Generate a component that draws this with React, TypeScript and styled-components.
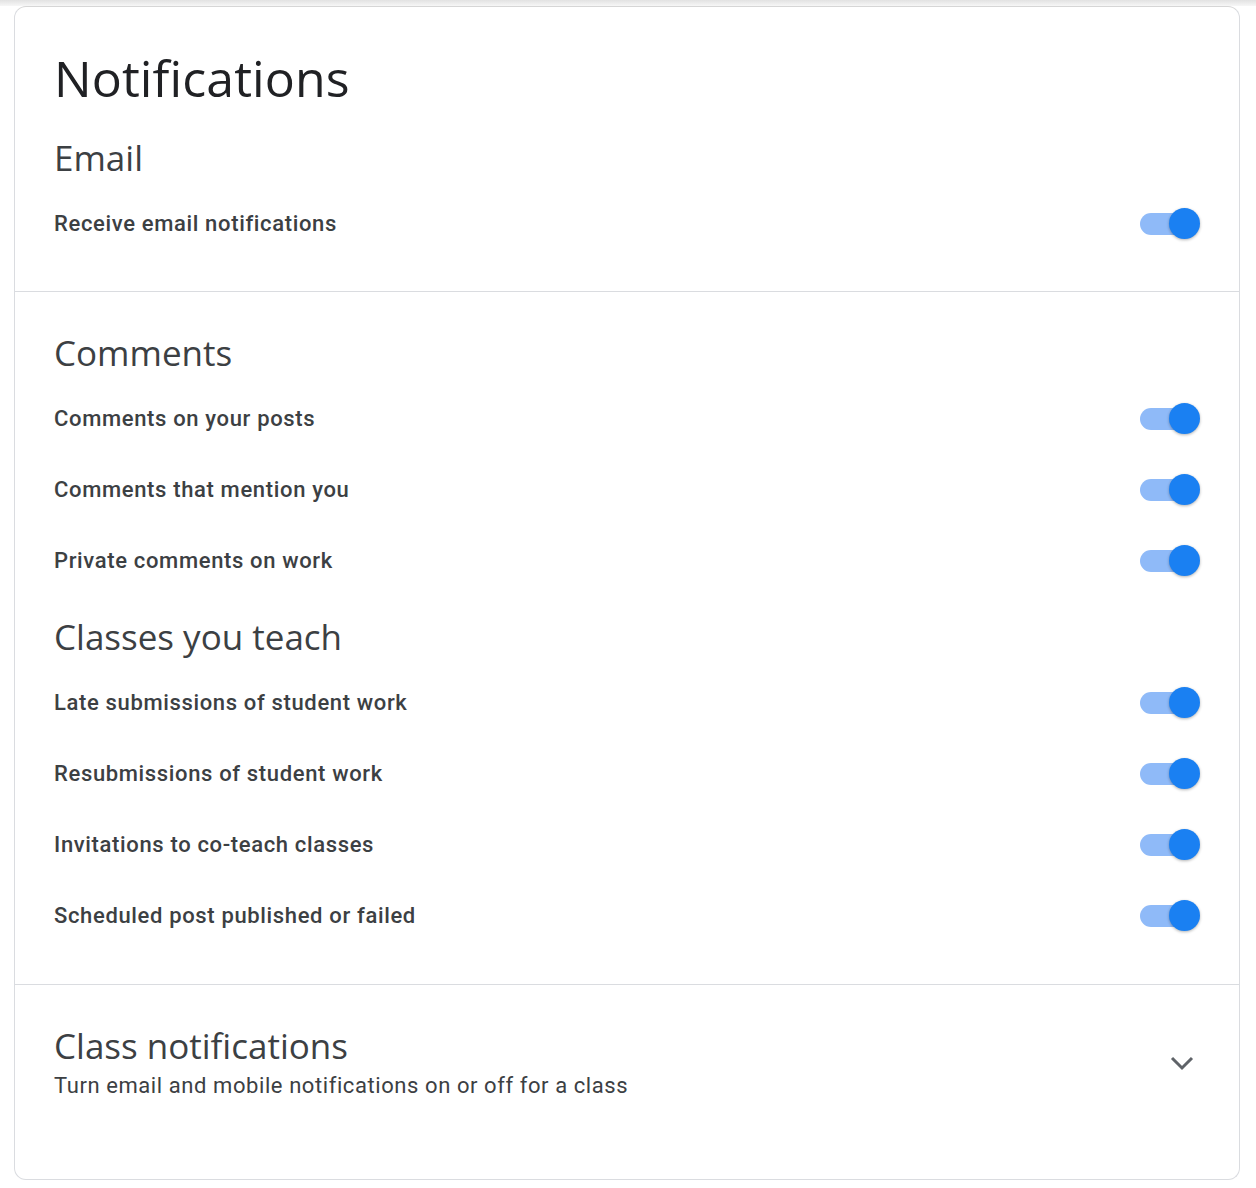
import React from "react";
import styled, { createGlobalStyle } from "styled-components";

const Global = createGlobalStyle`
  html, body { margin: 0; padding: 0; background: #ffffff; }
  body { font-family: Roboto, "Liberation Sans", Arial, sans-serif; }
  * { box-sizing: border-box; }
`;

const Page = styled.div`
  width: 1256px;
  min-height: 1188px;
  background: #ffffff;
`;

const Shade = styled.div`
  height: 6px;
  background: linear-gradient(#e2e2e2, #f7f7f7);
`;

const Card = styled.div`
  margin: 0 16px 0 14px;
  border: 1px solid #dadce0;
  border-top-color: #d6d6d6;
  border-radius: 12px;
  background: #ffffff;
  overflow: hidden;
`;

const Section = styled.section<{ $top: number; $bottom: number }>`
  padding: ${(p) => p.$top}px 39px ${(p) => p.$bottom}px 39px;
  & + & {
    border-top: 1px solid #dadce0;
  }
`;

const Title = styled.h1`
  margin: 0;
  font-family: "Open Sans", "Noto Sans", sans-serif;
  font-weight: 400;
  font-size: 50px;
  line-height: 56px;
  letter-spacing: 0.1px;
  color: #202124;
`;

const Group = styled.div<{ $gap: number }>`
  margin-top: ${(p) => p.$gap}px;
`;

const Heading = styled.h2`
  margin: 0 0 8px 0;
  font-family: "Open Sans", "Noto Sans", sans-serif;
  font-weight: 400;
  font-size: 35px;
  line-height: 44px;
  letter-spacing: 0;
  color: #3c4043;
`;

const Row = styled.div`
  height: 71px;
  display: flex;
  align-items: center;
  justify-content: space-between;
`;

const Label = styled.span`
  font-family: Roboto, "Liberation Sans", sans-serif;
  font-weight: 500;
  font-size: 22px;
  letter-spacing: 0.65px;
  color: #3c4043;
`;

const SwitchTrack = styled.div`
  position: relative;
  width: 59px;
  height: 22px;
  margin-right: 1px;
  border-radius: 11px;
  background: #8fbaf8;
`;

const SwitchThumb = styled.div`
  position: absolute;
  right: -1px;
  top: 50%;
  width: 31px;
  height: 31px;
  margin-top: -15.5px;
  border-radius: 50%;
  background: #1a80f2;
  box-shadow: 0 1px 3px rgba(0, 0, 0, 0.3);
`;

const Toggle = () => (
  <SwitchTrack role="switch" aria-checked="true">
    <SwitchThumb />
  </SwitchTrack>
);

const ExpandRow = styled.div`
  display: flex;
  align-items: center;
  justify-content: space-between;
`;

const ExpandText = styled.div`
  display: flex;
  flex-direction: column;
`;

const ExpandTitle = styled.h2`
  margin: 0;
  font-family: "Open Sans", "Noto Sans", sans-serif;
  font-weight: 400;
  font-size: 35px;
  line-height: 44px;
  letter-spacing: 0;
  color: #3c4043;
`;

const Sub = styled.div`
  margin-top: 3px;
  font-family: Roboto, "Liberation Sans", sans-serif;
  font-weight: 400;
  font-size: 22px;
  line-height: 30px;
  letter-spacing: 0.58px;
  color: #3c4043;
`;

const IconBox = styled.div`
  width: 36px;
  height: 36px;
  display: flex;
  align-items: center;
  justify-content: center;
`;

const Chevron = () => (
  <IconBox>
    <svg width="26" height="18" viewBox="0 0 26 18">
      <path
        d="M3 4 L13 14 L23 4"
        fill="none"
        stroke="#5f6368"
        strokeWidth="3"
        strokeLinecap="butt"
        strokeLinejoin="miter"
      />
    </svg>
  </IconBox>
);

const comments = [
  "Comments on your posts",
  "Comments that mention you",
  "Private comments on work",
];

const teach = [
  "Late submissions of student work",
  "Resubmissions of student work",
  "Invitations to co-teach classes",
  "Scheduled post published or failed",
];

export default function App() {
  return (
    <Page>
      <Global />
      <Shade />
      <Card>
        <Section $top={43} $bottom={32}>
          <Title>Notifications</Title>
          <Group $gap={30}>
            <Heading>Email</Heading>
            <Row>
              <Label>Receive email notifications</Label>
              <Toggle />
            </Row>
          </Group>
        </Section>
        <Section $top={39} $bottom={33}>
          <Group $gap={0}>
            <Heading>Comments</Heading>
            {comments.map((c) => (
              <Row key={c}>
                <Label>{c}</Label>
                <Toggle />
              </Row>
            ))}
          </Group>
          <Group $gap={19}>
            <Heading>Classes you teach</Heading>
            {teach.map((c) => (
              <Row key={c}>
                <Label>{c}</Label>
                <Toggle />
              </Row>
            ))}
          </Group>
        </Section>
        <Section $top={39} $bottom={78}>
          <ExpandRow>
            <ExpandText>
              <ExpandTitle>Class notifications</ExpandTitle>
              <Sub>Turn email and mobile notifications on or off for a class</Sub>
            </ExpandText>
            <Chevron />
          </ExpandRow>
        </Section>
      </Card>
    </Page>
  );
}
